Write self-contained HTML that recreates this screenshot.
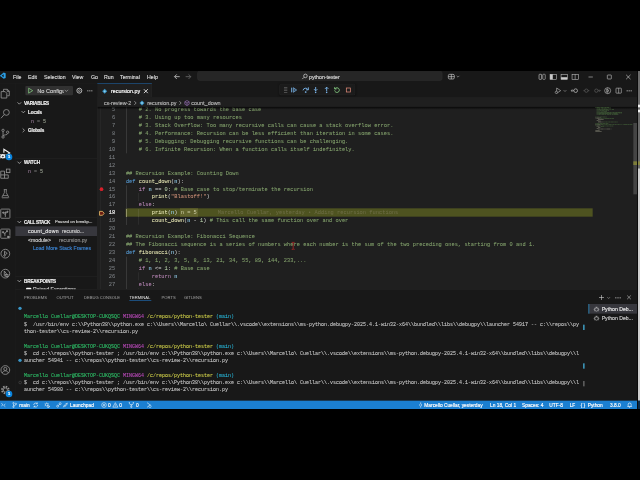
<!DOCTYPE html>
<html lang="en"><head><meta charset="utf-8"><title>recursion.py - python-tester - Visual Studio Code</title>
<style>
html,body{margin:0;padding:0;background:#000;}
body{width:640px;height:480px;overflow:hidden;position:relative;}
#w{position:absolute;left:0;top:0;width:1920px;height:1440px;transform:scale(0.33333333);transform-origin:0 0;filter:blur(0.3px);font-family:"Liberation Sans",sans-serif;color:#ccc;font-size:16px;-webkit-text-stroke:0.45px;}
#win{position:absolute;left:0px;top:213px;width:1920px;height:1014px;background:#1f1f1f;overflow:hidden;}
.a{position:absolute;}
.t{position:absolute;white-space:nowrap;line-height:20px;height:20px;}
.b{font-weight:bold;}
svg{position:absolute;overflow:visible;}
.mono{font-family:"Liberation Mono",monospace;}
.code{position:absolute;white-space:pre;font-family:"Liberation Mono",monospace;font-size:16px;letter-spacing:0.07px;line-height:24px;height:24px;color:#ccc;-webkit-text-stroke:0.15px;}
.ln{position:absolute;white-space:pre;font-family:"Liberation Mono",monospace;font-size:16px;letter-spacing:0.07px;line-height:24px;height:24px;color:#6e7681;text-align:right;width:60px;-webkit-text-stroke:0.15px;}
.c{color:#84a36d}.k{color:#569cd6}.p{color:#bb88b8}.f{color:#e4e4b2}.v{color:#9cdcfe}.s{color:#ce9178}.n{color:#b5cea8}
.term{position:absolute;white-space:pre;font-family:"Liberation Mono",monospace;font-size:15px;line-height:22px;height:22px;color:#ccc;-webkit-text-stroke:0.2px;}
.g{color:#2ec46a}.m{color:#c24cc2}.y{color:#d2d24a}.cy{color:#29b8db}
.ig{position:absolute;width:1.500px;background:#444;}
</style></head>
<body><div id="w"><div id="win">
<div class="a" style="left:0;top:0;width:1920px;height:37px;background:#181818;border-bottom:1px solid #2b2b2b;box-sizing:border-box"></div>
<svg style="left:-6px;top:4px" width="24" height="20" viewBox="0 0 24 20"><path d="M17 0.5 L23 3 V17 L17 19.5 L6 10 Z M17 5.5 L11 10 L17 14.5 Z" fill="#2a9fe6"/><path d="M0 6 L2 4.5 L9 10 L2 15.5 L0 14 L5 10 Z" fill="#1f8ad2"/></svg>
<div class="t" style="left:39px;top:8px;font-size:15.8px;color:#d8d8d8">File</div>
<div class="t" style="left:84px;top:8px;font-size:15.8px;color:#d8d8d8">Edit</div>
<div class="t" style="left:132px;top:8px;font-size:15.8px;color:#d8d8d8">Selection</div>
<div class="t" style="left:216px;top:8px;font-size:15.8px;color:#d8d8d8">View</div>
<div class="t" style="left:273px;top:8px;font-size:15.8px;color:#d8d8d8">Go</div>
<div class="t" style="left:312px;top:8px;font-size:15.8px;color:#d8d8d8">Run</div>
<div class="t" style="left:360px;top:8px;font-size:15.8px;color:#d8d8d8">Terminal</div>
<div class="t" style="left:441px;top:8px;font-size:15.8px;color:#d8d8d8">Help</div>
<svg style="left:521px;top:7px" width="20" height="20" viewBox="0 0 16 16"><path d="M14.500 8H2.500M7.500 2.500L2 8l5.500 5.500" fill="none" stroke="#d8d8d8" stroke-width="1.800"/></svg>
<svg style="left:555px;top:7px" width="20" height="20" viewBox="0 0 16 16"><path d="M1.500 8h12M8.500 2.500L14 8l-5.500 5.500" fill="none" stroke="#707070" stroke-width="1.800"/></svg>
<div class="a" style="left:592px;top:0px;width:735px;height:29px;box-sizing:border-box;background:#262626;border:1px solid #383838;border-radius:7px"></div>
<svg style="left:905px;top:7px" width="19" height="19" viewBox="0 0 16 16"><circle cx="9.5" cy="6.5" r="4.5" fill="none" stroke="#ddd" stroke-width="1.700"/><path d="M6 10L1.5 14.5" stroke="#ddd" stroke-width="1.800"/></svg>
<div class="t" style="left:927px;top:8px;font-size:15.8px;color:#d8d8d8">python-tester</div>
<svg style="left:1344px;top:8px" width="20" height="18" viewBox="0 0 20 18"><rect x="1" y="2" width="18" height="14" rx="4" fill="none" stroke="#ccc" stroke-width="2"/><path d="M1 9h18M10 2v14" stroke="#ccc" stroke-width="2"/></svg>
<svg style="left:1369px;top:13px" width="10" height="8" viewBox="0 0 10 8"><path d="M1 1.5l4 4 4-4" fill="none" stroke="#ccc" stroke-width="1.4"/></svg>
<svg style="left:1616px;top:8px" width="21" height="19" viewBox="0 0 18 16"><rect x="1" y="1.5" width="6.5" height="13" rx="1.5" fill="none" stroke="#ddd" stroke-width="1.500"/><rect x="10.5" y="1.5" width="6.5" height="13" rx="1.5" fill="none" stroke="#ccc" stroke-width="1.4"/></svg>
<svg style="left:1649px;top:8px" width="21" height="19" viewBox="0 0 18 16"><rect x="1" y="1.5" width="16" height="13" fill="none" stroke="#ccc" stroke-width="1.4"/><rect x="1" y="1.5" width="7" height="13" fill="#ccc"/></svg>
<svg style="left:1682px;top:8px" width="21" height="19" viewBox="0 0 18 16"><rect x="1" y="1.5" width="16" height="13" fill="none" stroke="#ccc" stroke-width="1.4"/><rect x="1" y="9" width="16" height="5.5" fill="#ccc"/></svg>
<svg style="left:1715px;top:8px" width="21" height="19" viewBox="0 0 18 16"><rect x="1" y="1.5" width="16" height="13" fill="none" stroke="#ccc" stroke-width="1.4"/><path d="M9 1.5v13" stroke="#ccc" stroke-width="1.4"/></svg>
<svg style="left:1764px;top:10px" width="16" height="16" viewBox="0 0 16 16"><path d="M1.500 8h13" stroke="#e8e8e8" stroke-width="1.500"/></svg>
<svg style="left:1820px;top:10px" width="16" height="16" viewBox="0 0 16 16"><rect x="2" y="2" width="12" height="12" rx="1.500" fill="none" stroke="#e8e8e8" stroke-width="1.500"/></svg>
<svg style="left:1877px;top:10px" width="16" height="16" viewBox="0 0 16 16"><path d="M1.500 1.500l13 13M14.500 1.500l-13 13" stroke="#f0f0f0" stroke-width="1.600"/></svg>
<div class="a" style="left:0;top:37px;width:46px;height:952px;background:#181818;border-right:1px solid #2b2b2b;box-sizing:border-box"></div>
<svg style="left:1.0px;top:52.5px" width="30" height="30" viewBox="0 0 24 24" fill="none" stroke="#939393" stroke-width="2"><path d="M7.500 6V1.500h9.500l4.500 4.500v11h-5"/><path d="M16.500 1.500V6.500H21.500"/><path d="M2 7h9.500l4 4v11.500H2z" /></svg>
<svg style="left:1.0px;top:112.5px" width="30" height="30" viewBox="0 0 24 24" fill="none" stroke="#939393" stroke-width="2"><circle cx="14.500" cy="9" r="7"/><path d="M9.500 14L1.500 23" stroke-width="2"/></svg>
<svg style="left:1.0px;top:172.5px" width="30" height="30" viewBox="0 0 24 24" fill="none" stroke="#939393" stroke-width="2"><circle cx="6.500" cy="4" r="2.800"/><circle cx="6.500" cy="20" r="2.800"/><circle cx="17.500" cy="8.500" r="2.800"/><path d="M6.500 7v10M17.500 11.500c0 5-11 2-11 6"/></svg>
<svg style="left:1.0px;top:232.5px" width="30" height="30" viewBox="0 0 24 24" fill="none" stroke="#f8f8f8" stroke-width="2.600"><path d="M8.500 10V1.500L22.500 10.500 14 16"/><circle cx="6" cy="18" r="4" /><path d="M0 14l3 2M12 14l-3 2M0 22.500l3-2M12 22.500l-3-2M0 18.500h2M10 18.500h2M2.500 17h7"/></svg>
<div class="a" style="left:17px;top:248px;width:20px;height:20px;border-radius:10px;background:#0a84dd"></div>
<div class="t b" style="left:24px;top:248px;font-size:12px;color:#fff">1</div>
<svg style="left:1.0px;top:292.5px" width="30" height="30" viewBox="0 0 24 24" fill="none" stroke="#939393" stroke-width="2"><path d="M1 6h9v9h9v8H1zM10 15v8M1 15h9"/><rect x="14.500" y="1" width="8.500" height="8.500"/></svg>
<svg style="left:2.0px;top:353.5px" width="28" height="28" viewBox="0 0 24 24" fill="none" stroke="#939393" stroke-width="2"><path d="M8 1.500h8M9.500 1.500v8L3.500 20.500a1.300 1.300 0 0 0 1.200 2h14.600a1.300 1.300 0 0 0 1.200-2L14.500 9.500v-8M5.500 17h13"/></svg>
<svg style="left:1.0px;top:412.5px" width="30" height="30" viewBox="0 0 24 24" fill="none" stroke="#939393" stroke-width="2"><rect x="1" y="1" width="22" height="22" rx="1.500"/><path d="M12 20V11M12 14.500l-4.500-4M12 12.500l4.500-4" stroke-width="2"/><circle cx="7" cy="9.500" r="1.600" fill="#939393"/><circle cx="17" cy="7.500" r="1.600" fill="#939393"/><circle cx="12" cy="9" r="1.300" fill="#939393"/></svg>
<svg style="left:1.0px;top:472.5px" width="30" height="30" viewBox="0 0 24 24" fill="none" stroke="#939393" stroke-width="2"><rect x="1" y="1" width="22" height="22" rx="1.500"/><path d="M11 18V9.500M11 13l-4-3.500M11 11l4.500-4" stroke-width="2"/><circle cx="6.500" cy="8.500" r="1.600" fill="#939393"/><circle cx="16" cy="6" r="1.600" fill="#939393"/><rect x="16" y="17" width="7" height="6" fill="#939393" stroke="#181818" stroke-width="1"/></svg>
<svg style="left:1.0px;top:532.5px" width="30" height="30" viewBox="0 0 24 24" fill="none" stroke="#939393" stroke-width="2"><circle cx="12" cy="12" r="10.500"/><circle cx="10" cy="16.500" r="1.800"/><path d="M10 14.500V6l6.500 5.500-5 2.500"/></svg>
<svg style="left:1.0px;top:592.5px" width="30" height="30" viewBox="0 0 24 24" fill="none" stroke="#939393" stroke-width="2"><circle cx="12" cy="12" r="10.500"/><path d="M9.500 18.500V5.500l7 9h-5.500"/><rect x="13" y="14.500" width="5.500" height="4.500"/></svg>
<svg style="left:1.0px;top:882.0px" width="30" height="30" viewBox="0 0 24 24" fill="none" stroke="#939393" stroke-width="2"><circle cx="12" cy="12" r="10.500"/><circle cx="12" cy="9.500" r="3.800"/><path d="M4.500 19.500c1.500-4 4-5.500 7.500-5.500s6 1.500 7.500 5.500"/></svg>
<svg style="left:1.0px;top:942.0px" width="30" height="30" viewBox="0 0 24 24" fill="none" stroke="#939393" stroke-width="2"><circle cx="12" cy="12" r="8" stroke-width="4.500" stroke-dasharray="3.600 2.680"/><circle cx="12" cy="12" r="5"/></svg>
<div class="a" style="left:17px;top:959px;width:20px;height:20px;border-radius:10px;background:#0a84dd"></div>
<div class="t b" style="left:24px;top:959px;font-size:12px;color:#fff">1</div>
<div class="a" style="left:46px;top:37px;width:246px;height:618px;background:#181818;border-right:1px solid #2b2b2b;box-sizing:border-box"></div>
<div class="a" style="left:76px;top:45px;width:143px;height:28px;background:#313131;border-radius:3px"></div>
<svg style="left:84px;top:50px" width="16" height="18" viewBox="0 0 16 18"><path d="M2 1.5l12 7.5-12 7.5z" fill="none" stroke="#89d185" stroke-width="2.2" stroke-linejoin="round"/></svg>
<div class="a" style="left:112px;top:50px;width:80px;height:22px;overflow:hidden"><div class="t" style="left:0;top:0;font-size:16.800px;color:#ccc">No Configurations</div></div>
<svg style="left:193px;top:55px" width="12" height="9" viewBox="0 0 12 9"><path d="M1 1.5l5 5 5-5" fill="none" stroke="#ccc" stroke-width="1.6"/></svg>
<svg style="left:228px;top:49px" width="20" height="20" viewBox="0 0 20 20"><circle cx="10" cy="10" r="7.400" fill="none" stroke="#ccc" stroke-width="2.600"/><circle cx="10" cy="10" r="2.800" fill="none" stroke="#ccc" stroke-width="1.800"/></svg>
<div class="a" style="left:262px;top:58px;width:3px;height:3px;background:#ccc;box-shadow:6px 0 #ccc,12px 0 #ccc"></div>
<svg style="left:51px;top:92px" width="14" height="10" viewBox="0 0 14 10"><path d="M1.500 2l5.500 5.500L12.500 2" fill="none" stroke="#ccc" stroke-width="2"/></svg>
<div class="t b" style="left:72px;top:88px;font-size:13.800px;letter-spacing:-0.4px;color:#f4f4f4">VARIABLES</div>
<svg style="left:63px;top:118px" width="14" height="10" viewBox="0 0 14 10"><path d="M1.500 2l5.500 5.500L12.500 2" fill="none" stroke="#ccc" stroke-width="2"/></svg>
<div class="t b" style="left:84px;top:115px;font-size:13.800px;letter-spacing:-0.300px;color:#f4f4f4">Locals</div>
<div class="t mono" style="left:93px;top:143px;font-size:15px"><span style="color:#8a718a">n</span> <span style="color:#777">=</span> <span style="color:#8e9586">5</span></div>
<svg style="left:66px;top:171px" width="10" height="14" viewBox="0 0 10 14"><path d="M2 1.500l5.500 5.500L2 12.500" fill="none" stroke="#ccc" stroke-width="2"/></svg>
<div class="t b" style="left:84px;top:170px;font-size:13.800px;letter-spacing:-0.300px;color:#f4f4f4">Globals</div>
<div class="a" style="left:46px;top:262px;width:246px;height:1px;background:#2b2b2b"></div>
<svg style="left:51px;top:270px" width="14" height="10" viewBox="0 0 14 10"><path d="M1.500 2l5.500 5.500L12.500 2" fill="none" stroke="#ccc" stroke-width="2"/></svg>
<div class="t b" style="left:72px;top:266px;font-size:13.800px;letter-spacing:-0.4px;color:#f4f4f4">WATCH</div>
<div class="t mono" style="left:84px;top:293px;font-size:15px"><span style="color:#8a718a">n</span> <span style="color:#777">=</span> <span style="color:#8e9586">5</span></div>
<div class="a" style="left:46px;top:440px;width:246px;height:1px;background:#2b2b2b"></div>
<svg style="left:51px;top:448px" width="14" height="10" viewBox="0 0 14 10"><path d="M1.500 2l5.500 5.500L12.500 2" fill="none" stroke="#ccc" stroke-width="2"/></svg>
<div class="t b" style="left:72px;top:444px;font-size:13.800px;letter-spacing:-0.9px;color:#f4f4f4">CALL STACK</div>
<div class="t" style="left:165px;top:442px;font-size:12.5px;color:#ccc">Paused on breakp...</div>
<div class="a" style="left:46px;top:466px;width:245px;height:29px;background:#37373d"></div>
<div class="t" style="left:84px;top:471px;font-size:15.500px;letter-spacing:0.900px;color:#e4e4e4">count_down</div>
<div class="t" style="left:186px;top:471px;font-size:15px;color:#ccc">recursio...</div>
<div class="t" style="left:84px;top:497px;font-size:15.5px;color:#ccc">&lt;module&gt;</div>
<div class="t" style="left:177px;top:497px;font-size:15.5px;color:#8a8a8a">recursion.py</div>
<div class="t" style="left:99px;top:522px;font-size:15.5px;color:#3b82d0">Load More Stack Frames</div>
<div class="a" style="left:46px;top:617px;width:246px;height:1px;background:#2b2b2b"></div>
<svg style="left:51px;top:625px" width="14" height="10" viewBox="0 0 14 10"><path d="M1.500 2l5.500 5.500L12.500 2" fill="none" stroke="#ccc" stroke-width="2"/></svg>
<div class="t b" style="left:72px;top:621px;font-size:13.800px;letter-spacing:-0.4px;color:#f4f4f4">BREAKPOINTS</div>
<div class="a" style="left:78px;top:650px;width:16px;height:16px;border-radius:3px;background:#fff"></div>
<div class="t" style="left:99px;top:646px;font-size:15.5px;color:#ccc">Raised Exceptions</div>
<div class="a" style="left:292px;top:36px;width:1628px;height:43px;background:#181818;border-bottom:1px solid #2b2b2b;box-sizing:border-box"></div>
<div class="a" style="left:292px;top:36px;width:164px;height:43px;background:#1f1f1f;border-top:2px solid #1c5890;border-right:1px solid #2b2b2b;box-sizing:border-box"></div>
<svg style="left:306px;top:53px" width="16" height="16" viewBox="0 0 16 16"><path d="M8 0.5L15.5 8 8 15.5 0.500 8z" fill="#3a94c4"/><path d="M8 4.500L11.5 8 8 11.5 4.500 8z" fill="#8fd0ee"/></svg>
<div class="t" style="left:333px;top:52px;font-size:16px;color:#fff">recursion.py</div>
<svg style="left:430px;top:53px" width="15" height="15" viewBox="0 0 14 14"><path d="M1.500 1.500l11 11M12.500 1.500l-11 11" stroke="#fff" stroke-width="2.200"/></svg>
<svg style="left:1664px;top:49px" width="20" height="20" viewBox="0 0 20 20"><path d="M6 2l12 8-12 8z" fill="none" stroke="#ccc" stroke-width="1.7" stroke-linejoin="round"/><circle cx="5" cy="15" r="3.5" fill="#181818" stroke="#ccc" stroke-width="1.5"/></svg>
<svg style="left:1690px;top:56px" width="10" height="8" viewBox="0 0 10 8"><path d="M1 1.500l4 4 4-4" fill="none" stroke="#ccc" stroke-width="1.4"/></svg>
<svg style="left:1713px;top:49px" width="22" height="20" viewBox="0 0 22 20"><circle cx="14" cy="10" r="5.5" fill="none" stroke="#ccc" stroke-width="2"/><path d="M1 10h8M4 6l-3 4 3 4" fill="none" stroke="#ccc" stroke-width="1.7"/></svg>
<svg style="left:1749px;top:49px" width="20" height="20" viewBox="0 0 20 20"><circle cx="10" cy="10" r="5" fill="none" stroke="#6a6a6a" stroke-width="1.7"/><path d="M1 10h4M15 10h4" stroke="#6a6a6a" stroke-width="1.7"/></svg>
<svg style="left:1780px;top:49px" width="22" height="20" viewBox="0 0 22 20"><circle cx="9" cy="10" r="5" fill="none" stroke="#6a6a6a" stroke-width="1.7"/><path d="M14 10h7M18 7l3 3-3 3" fill="none" stroke="#6a6a6a" stroke-width="1.7"/></svg>
<svg style="left:1812px;top:48px" width="22" height="22" viewBox="0 0 22 22"><circle cx="11" cy="11" r="9" fill="none" stroke="#ccc" stroke-width="1.7"/><path d="M8 6l7 5-7 5z" fill="none" stroke="#ccc" stroke-width="1.6"/><path d="M11 2v18" stroke="#ccc" stroke-width="1.2"/></svg>
<svg style="left:1846px;top:49px" width="20" height="20" viewBox="0 0 20 20"><rect x="2" y="2.5" width="16" height="15" rx="1.5" fill="none" stroke="#ccc" stroke-width="1.7"/><path d="M10 2.5v15" stroke="#ccc" stroke-width="1.7"/></svg>
<div class="a" style="left:1880px;top:58px;width:3px;height:3px;background:#ccc;box-shadow:6px 0 #ccc,12px 0 #ccc"></div>
<div class="a" style="left:838px;top:39px;width:228px;height:34px;background:#1b1b1b;border:1px solid #303030;box-sizing:border-box;box-shadow:0 0 5px rgba(0,0,0,.5);border-radius:5px"></div>
<div class="a" style="left:852px;top:48px;width:10px;height:2px;background:#666;box-shadow:0 5px #666,0 10px #666,0 15px #666"></div>
<svg style="left:872px;top:47px" width="20" height="20" viewBox="0 0 20 20"><path d="M3 3v14" stroke="#80bdf5" stroke-width="2.600"/><path d="M8 3l10 7-10 7z" fill="#80bdf5" fill-opacity=".35" stroke="#80bdf5" stroke-width="1.8" stroke-linejoin="round"/></svg>
<svg style="left:906px;top:47px" width="22" height="20" viewBox="0 0 22 20"><path d="M3 11a8 8 0 0 1 15-2" fill="none" stroke="#80bdf5" stroke-width="2.600"/><path d="M19 2v7.500h-7" fill="none" stroke="#80bdf5" stroke-width="2.600"/><circle cx="11" cy="16" r="2.6" fill="#80bdf5"/></svg>
<svg style="left:937px;top:47px" width="20" height="20" viewBox="0 0 20 20"><path d="M10 1v11M5 7.500l5 5 5-5" fill="none" stroke="#80bdf5" stroke-width="2.600"/><circle cx="10" cy="17" r="2.4" fill="#80bdf5"/></svg>
<svg style="left:970px;top:47px" width="20" height="20" viewBox="0 0 20 20"><path d="M10 13V2M5 6.500l5-5 5 5" fill="none" stroke="#80bdf5" stroke-width="2.600"/><circle cx="10" cy="17" r="2.4" fill="#80bdf5"/></svg>
<svg style="left:1001px;top:47px" width="20" height="20" viewBox="0 0 20 20"><path d="M4.500 6a7 7 0 1 1-1.500 5" fill="none" stroke="#89d185" stroke-width="2.600"/><path d="M3 1.500v5.500h5.500" fill="none" stroke="#89d185" stroke-width="2.600"/></svg>
<svg style="left:1035px;top:47px" width="20" height="20" viewBox="0 0 20 20"><rect x="4" y="4" width="12" height="12" fill="none" stroke="#e08a78" stroke-width="2.200"/></svg>
<div class="a" style="left:292px;top:79px;width:1628px;height:28px;background:#1f1f1f"></div>
<div class="t" style="left:312px;top:86px;font-size:16px;color:#b4b4b4">cs-review-2</div>
<svg style="left:401px;top:89px" width="10" height="14" viewBox="0 0 10 14"><path d="M2 1.500l5.500 5.500L2 12.500" fill="none" stroke="#b4b4b4" stroke-width="2"/></svg>
<svg style="left:418px;top:88px" width="16" height="16" viewBox="0 0 16 16"><path d="M8 0.5L15.5 8 8 15.5 0.500 8z" fill="#3a94c4"/><path d="M8 4.500L11.5 8 8 11.5 4.500 8z" fill="#8fd0ee"/></svg>
<div class="t" style="left:442px;top:86px;font-size:16px;color:#b4b4b4">recursion.py</div>
<svg style="left:536px;top:89px" width="10" height="14" viewBox="0 0 10 14"><path d="M2 1.500l5.500 5.500L2 12.500" fill="none" stroke="#b4b4b4" stroke-width="2"/></svg>
<svg style="left:552px;top:87px" width="18" height="18" viewBox="0 0 18 18"><path d="M9 1.500l6.500 3.800v7.400L9 16.500l-6.500-3.800V5.300z M2.500 5.300L9 9l6.500-3.700M9 9v7.500" fill="none" stroke="#b180d7" stroke-width="1.600"/></svg>
<div class="t" style="left:574px;top:86px;font-size:16.300px;color:#b4b4b4">count_down</div>
<div class="a" style="left:292px;top:107px;width:1628px;height:548px;overflow:hidden">
<div class="a" style="left:9px;top:0;width:1.500px;height:548px;background:#2a2a2a"></div>
<div class="a" style="left:84.7px;top:305.4px;width:1401px;height:25px;background:#4e5320"></div>
<div class="a" style="left:248.1px;top:305.4px;width:54px;height:25px;background:#63652e"></div>
<div class="ig" style="left:86.2px;top:-2.6px;height:142.8px;background:#464646"></div>
<div class="ig" style="left:86.2px;top:235.5px;height:119.0px;background:#464646"></div>
<div class="ig" style="left:123.6px;top:259.2px;height:23.8px;background:#464646"></div>
<div class="ig" style="left:123.6px;top:306.9px;height:47.6px;background:#4a4a4a"></div>
<div class="ig" style="left:86.2px;top:306.9px;height:23.8px;background:#b9b980"></div>
<div class="ig" style="left:123.6px;top:306.9px;height:23.8px;background:#77793c"></div>
<div class="ig" style="left:86.2px;top:449.7px;height:119.0px;background:#464646"></div>
<div class="ig" style="left:123.6px;top:497.2px;height:23.8px;background:#464646"></div>
<div class="ig" style="left:123.6px;top:544.9px;height:23.8px;background:#464646"></div>
<div class="ln" style="left:-6.5px;top:-2.6px;color:#7f8387">5</div>
<div class="code" style="left:85.7px;top:-2.6px"><span class="c">    # 2. No progress towards the base case</span></div>
<div class="ln" style="left:-6.5px;top:21.2px;color:#7f8387">6</div>
<div class="code" style="left:85.7px;top:21.2px"><span class="c">    # 3. Using up too many resources</span></div>
<div class="ln" style="left:-6.5px;top:45.1px;color:#7f8387">7</div>
<div class="code" style="left:85.7px;top:45.1px"><span class="c">    # 3. Stack Overflow: Too many recursive calls can cause a stack overflow error.</span></div>
<div class="ln" style="left:-6.5px;top:68.9px;color:#7f8387">8</div>
<div class="code" style="left:85.7px;top:68.9px"><span class="c">    # 4. Performance: Recursion can be less efficient than iteration in some cases.</span></div>
<div class="ln" style="left:-6.5px;top:92.6px;color:#7f8387">9</div>
<div class="code" style="left:85.7px;top:92.6px"><span class="c">    # 5. Debugging: Debugging recursive functions can be challenging.</span></div>
<div class="ln" style="left:-6.5px;top:116.4px;color:#7f8387">10</div>
<div class="code" style="left:85.7px;top:116.4px"><span class="c">    # 6. Infinite Recursion: When a function calls itself indefinitely.</span></div>
<div class="ln" style="left:-6.5px;top:140.2px;color:#7f8387">11</div>
<div class="ln" style="left:-6.5px;top:164.1px;color:#7f8387">12</div>
<div class="ln" style="left:-6.5px;top:187.9px;color:#7f8387">13</div>
<div class="code" style="left:85.7px;top:187.9px"><span class="c">## Recursion Example: Counting Down</span></div>
<div class="ln" style="left:-6.5px;top:211.6px;color:#7f8387">14</div>
<div class="code" style="left:85.7px;top:211.6px"><span class="k">def</span> <span class="f">count_down</span>(<span class="v">n</span>):</div>
<div class="ln" style="left:-6.5px;top:235.5px;color:#7f8387">15</div>
<div class="code" style="left:85.7px;top:235.5px">    <span class="p">if</span> <span class="v">n</span> == <span class="n">0</span>: <span class="c"># Base case to stop/terminate the recursion</span></div>
<div class="ln" style="left:-6.5px;top:259.2px;color:#7f8387">16</div>
<div class="code" style="left:85.7px;top:259.2px">        <span class="f">print</span>(<span class="s">&quot;Blastoff!&quot;</span>)</div>
<div class="ln" style="left:-6.5px;top:283.0px;color:#7f8387">17</div>
<div class="code" style="left:85.7px;top:283.0px">    <span class="p">else</span>:</div>
<div class="ln" style="left:-6.5px;top:306.9px;color:#f4f4f4;-webkit-text-stroke:0.500px">18</div>
<div class="code" style="left:85.7px;top:306.9px">        <span class="f">print</span>(<span class="v">n</span>)</div>
<div class="ln" style="left:-6.5px;top:330.7px;color:#7f8387">19</div>
<div class="code" style="left:85.7px;top:330.7px">        <span class="f">count_down</span>(<span class="v">n</span> - <span class="n">1</span>) <span class="c"># This call the same function over and over</span></div>
<div class="ln" style="left:-6.5px;top:354.5px;color:#7f8387">20</div>
<div class="ln" style="left:-6.5px;top:378.2px;color:#7f8387">21</div>
<div class="code" style="left:85.7px;top:378.2px"><span class="c">## Recursion Example: Fibonacci Sequence</span></div>
<div class="ln" style="left:-6.5px;top:402.0px;color:#7f8387">22</div>
<div class="code" style="left:85.7px;top:402.0px"><span class="c">## The Fibonacci sequence is a series of numbers where each number is the sum of the two preceding ones, starting from 0 and 1.</span></div>
<div class="ln" style="left:-6.5px;top:425.9px;color:#7f8387">23</div>
<div class="code" style="left:85.7px;top:425.9px"><span class="k">def</span> <span class="f">fibonacci</span>(<span class="v">n</span>):</div>
<div class="ln" style="left:-6.5px;top:449.7px;color:#7f8387">24</div>
<div class="code" style="left:85.7px;top:449.7px"><span class="c">    # 1, 1, 2, 3, 5, 8, 13, 21, 34, 55, 89, 144, 233,...</span></div>
<div class="ln" style="left:-6.5px;top:473.5px;color:#7f8387">25</div>
<div class="code" style="left:85.7px;top:473.5px">    <span class="p">if</span> <span class="v">n</span> <= <span class="n">1</span>: <span class="c"># Base case</span></div>
<div class="ln" style="left:-6.5px;top:497.2px;color:#7f8387">26</div>
<div class="code" style="left:85.7px;top:497.2px">        <span class="p">return</span> <span class="v">n</span></div>
<div class="ln" style="left:-6.5px;top:521.0px;color:#7f8387">27</div>
<div class="code" style="left:85.7px;top:521.0px">    <span class="p">else</span>:</div>
<div class="ln" style="left:-6.5px;top:544.9px;color:#7f8387">28</div>
<div class="code" style="left:85.7px;top:544.9px">        <span class="p">return</span> <span class="f">fibonacci</span>(<span class="v">n</span> - <span class="n">1</span>) + <span class="f">fibonacci</span>(<span class="v">n</span> - <span class="n">2</span>)</div>
<div class="code" style="left:250.1px;top:306.9px;color:#c8c8a0">n = 5</div>
<div class="code" style="left:361.3px;top:306.9px;color:#6d6d45">Marcello Cuellar, yesterday • Adding recursion functions</div>
<div class="a" style="left:7px;top:242.0px;width:11px;height:11px;border-radius:6px;background:#d8202a"></div>
<svg style="left:5px;top:311.9px" width="17" height="16" viewBox="0 0 16 14"><path d="M1.500 1.500h8.500l4.500 5.500-4.500 5.500H1.500z" fill="#6a1c12" stroke="#f2c46a" stroke-width="2.200" stroke-linejoin="round"/></svg>
<svg style="left:582px;top:405px" width="11" height="25" viewBox="0 0 10 22"><path d="M1 1.500h3l1 1 1-1h3M5 2.500v17M1 20.500h3l1-1 1 1h3" fill="none" stroke="#d42a2a" stroke-width="1.800"/></svg>
<div class="a" style="left:0;top:0;width:1628px;height:9px;background:linear-gradient(#000000cc,#00000000)"></div>
<div class="a" style="left:1494.0px;top:1.0px;width:1.9px;height:2px;background:#3f5a36"></div><div class="a" style="left:1496.9px;top:1.0px;width:9.7px;height:2px;background:#3f5a36"></div><div class="a" style="left:1507.6px;top:1.0px;width:1.0px;height:2px;background:#3f5a36"></div><div class="a" style="left:1509.5px;top:1.0px;width:7.8px;height:2px;background:#3f5a36"></div><div class="a" style="left:1518.2px;top:1.0px;width:3.9px;height:2px;background:#3f5a36"></div><div class="a" style="left:1523.1px;top:1.0px;width:4.8px;height:2px;background:#3f5a36"></div><div class="a" style="left:1528.9px;top:1.0px;width:5.8px;height:2px;background:#3f5a36"></div><div class="a" style="left:1497.9px;top:3.4px;width:1.0px;height:2px;background:#3f5a36"></div><div class="a" style="left:1499.8px;top:3.4px;width:2.9px;height:2px;background:#3f5a36"></div><div class="a" style="left:1503.7px;top:3.4px;width:5.8px;height:2px;background:#3f5a36"></div><div class="a" style="left:1510.5px;top:3.4px;width:1.9px;height:2px;background:#3f5a36"></div><div class="a" style="left:1513.4px;top:3.4px;width:4.8px;height:2px;background:#3f5a36"></div><div class="a" style="left:1519.2px;top:3.4px;width:2.9px;height:2px;background:#3f5a36"></div><div class="a" style="left:1523.1px;top:3.4px;width:2.9px;height:2px;background:#3f5a36"></div><div class="a" style="left:1527.0px;top:3.4px;width:3.9px;height:2px;background:#3f5a36"></div><div class="a" style="left:1531.8px;top:3.4px;width:9.7px;height:2px;background:#3f5a36"></div><div class="a" style="left:1497.9px;top:5.8px;width:1.0px;height:2px;background:#3f5a36"></div><div class="a" style="left:1499.8px;top:5.8px;width:1.9px;height:2px;background:#3f5a36"></div><div class="a" style="left:1502.7px;top:5.8px;width:6.8px;height:2px;background:#3f5a36"></div><div class="a" style="left:1510.5px;top:5.8px;width:1.9px;height:2px;background:#3f5a36"></div><div class="a" style="left:1513.4px;top:5.8px;width:4.8px;height:2px;background:#3f5a36"></div><div class="a" style="left:1519.2px;top:5.8px;width:3.9px;height:2px;background:#3f5a36"></div><div class="a" style="left:1524.1px;top:5.8px;width:3.9px;height:2px;background:#3f5a36"></div><div class="a" style="left:1497.9px;top:8.3px;width:1.0px;height:2px;background:#3f5a36"></div><div class="a" style="left:1499.8px;top:8.3px;width:1.9px;height:2px;background:#3f5a36"></div><div class="a" style="left:1502.7px;top:8.3px;width:7.8px;height:2px;background:#3f5a36"></div><div class="a" style="left:1511.5px;top:8.3px;width:4.8px;height:2px;background:#3f5a36"></div><div class="a" style="left:1517.3px;top:8.3px;width:1.9px;height:2px;background:#3f5a36"></div><div class="a" style="left:1520.2px;top:8.3px;width:2.9px;height:2px;background:#3f5a36"></div><div class="a" style="left:1524.1px;top:8.3px;width:8.7px;height:2px;background:#3f5a36"></div><div class="a" style="left:1533.8px;top:8.3px;width:1.9px;height:2px;background:#3f5a36"></div><div class="a" style="left:1536.7px;top:8.3px;width:2.9px;height:2px;background:#3f5a36"></div><div class="a" style="left:1540.6px;top:8.3px;width:1.9px;height:2px;background:#3f5a36"></div><div class="a" style="left:1543.5px;top:8.3px;width:6.8px;height:2px;background:#3f5a36"></div><div class="a" style="left:1497.9px;top:10.7px;width:1.0px;height:2px;background:#3f5a36"></div><div class="a" style="left:1499.8px;top:10.7px;width:1.9px;height:2px;background:#3f5a36"></div><div class="a" style="left:1502.7px;top:10.7px;width:1.9px;height:2px;background:#3f5a36"></div><div class="a" style="left:1505.6px;top:10.7px;width:7.8px;height:2px;background:#3f5a36"></div><div class="a" style="left:1514.4px;top:10.7px;width:6.8px;height:2px;background:#3f5a36"></div><div class="a" style="left:1522.1px;top:10.7px;width:2.9px;height:2px;background:#3f5a36"></div><div class="a" style="left:1526.0px;top:10.7px;width:3.9px;height:2px;background:#3f5a36"></div><div class="a" style="left:1530.9px;top:10.7px;width:3.9px;height:2px;background:#3f5a36"></div><div class="a" style="left:1497.9px;top:13.1px;width:1.0px;height:2px;background:#3f5a36"></div><div class="a" style="left:1499.8px;top:13.1px;width:1.9px;height:2px;background:#3f5a36"></div><div class="a" style="left:1502.7px;top:13.1px;width:4.8px;height:2px;background:#3f5a36"></div><div class="a" style="left:1508.5px;top:13.1px;width:1.9px;height:2px;background:#3f5a36"></div><div class="a" style="left:1511.5px;top:13.1px;width:2.9px;height:2px;background:#3f5a36"></div><div class="a" style="left:1515.3px;top:13.1px;width:3.9px;height:2px;background:#3f5a36"></div><div class="a" style="left:1520.2px;top:13.1px;width:8.7px;height:2px;background:#3f5a36"></div><div class="a" style="left:1497.9px;top:15.5px;width:1.0px;height:2px;background:#3f5a36"></div><div class="a" style="left:1499.8px;top:15.5px;width:1.9px;height:2px;background:#3f5a36"></div><div class="a" style="left:1502.7px;top:15.5px;width:4.8px;height:2px;background:#3f5a36"></div><div class="a" style="left:1508.5px;top:15.5px;width:8.7px;height:2px;background:#3f5a36"></div><div class="a" style="left:1518.2px;top:15.5px;width:2.9px;height:2px;background:#3f5a36"></div><div class="a" style="left:1522.1px;top:15.5px;width:3.9px;height:2px;background:#3f5a36"></div><div class="a" style="left:1527.0px;top:15.5px;width:8.7px;height:2px;background:#3f5a36"></div><div class="a" style="left:1536.7px;top:15.5px;width:4.8px;height:2px;background:#3f5a36"></div><div class="a" style="left:1542.5px;top:15.5px;width:2.9px;height:2px;background:#3f5a36"></div><div class="a" style="left:1546.4px;top:15.5px;width:4.8px;height:2px;background:#3f5a36"></div><div class="a" style="left:1552.2px;top:15.5px;width:1.0px;height:2px;background:#3f5a36"></div><div class="a" style="left:1554.1px;top:15.5px;width:4.8px;height:2px;background:#3f5a36"></div><div class="a" style="left:1560.0px;top:15.5px;width:7.8px;height:2px;background:#3f5a36"></div><div class="a" style="left:1568.7px;top:15.5px;width:5.8px;height:2px;background:#3f5a36"></div><div class="a" style="left:1497.9px;top:17.9px;width:1.0px;height:2px;background:#3f5a36"></div><div class="a" style="left:1499.8px;top:17.9px;width:1.9px;height:2px;background:#3f5a36"></div><div class="a" style="left:1502.7px;top:17.9px;width:11.6px;height:2px;background:#3f5a36"></div><div class="a" style="left:1515.3px;top:17.9px;width:8.7px;height:2px;background:#3f5a36"></div><div class="a" style="left:1525.0px;top:17.9px;width:2.9px;height:2px;background:#3f5a36"></div><div class="a" style="left:1528.9px;top:17.9px;width:1.9px;height:2px;background:#3f5a36"></div><div class="a" style="left:1531.8px;top:17.9px;width:3.9px;height:2px;background:#3f5a36"></div><div class="a" style="left:1536.7px;top:17.9px;width:8.7px;height:2px;background:#3f5a36"></div><div class="a" style="left:1546.4px;top:17.9px;width:3.9px;height:2px;background:#3f5a36"></div><div class="a" style="left:1551.2px;top:17.9px;width:8.7px;height:2px;background:#3f5a36"></div><div class="a" style="left:1560.9px;top:17.9px;width:1.9px;height:2px;background:#3f5a36"></div><div class="a" style="left:1563.8px;top:17.9px;width:3.9px;height:2px;background:#3f5a36"></div><div class="a" style="left:1568.7px;top:17.9px;width:5.8px;height:2px;background:#3f5a36"></div><div class="a" style="left:1497.9px;top:20.4px;width:1.0px;height:2px;background:#3f5a36"></div><div class="a" style="left:1499.8px;top:20.4px;width:1.9px;height:2px;background:#3f5a36"></div><div class="a" style="left:1502.7px;top:20.4px;width:9.7px;height:2px;background:#3f5a36"></div><div class="a" style="left:1513.4px;top:20.4px;width:8.7px;height:2px;background:#3f5a36"></div><div class="a" style="left:1523.1px;top:20.4px;width:8.7px;height:2px;background:#3f5a36"></div><div class="a" style="left:1532.8px;top:20.4px;width:8.7px;height:2px;background:#3f5a36"></div><div class="a" style="left:1542.5px;top:20.4px;width:2.9px;height:2px;background:#3f5a36"></div><div class="a" style="left:1546.4px;top:20.4px;width:1.9px;height:2px;background:#3f5a36"></div><div class="a" style="left:1549.3px;top:20.4px;width:11.6px;height:2px;background:#3f5a36"></div><div class="a" style="left:1497.9px;top:22.8px;width:1.0px;height:2px;background:#3f5a36"></div><div class="a" style="left:1499.8px;top:22.8px;width:1.9px;height:2px;background:#3f5a36"></div><div class="a" style="left:1502.7px;top:22.8px;width:7.8px;height:2px;background:#3f5a36"></div><div class="a" style="left:1511.5px;top:22.8px;width:9.7px;height:2px;background:#3f5a36"></div><div class="a" style="left:1522.1px;top:22.8px;width:3.9px;height:2px;background:#3f5a36"></div><div class="a" style="left:1527.0px;top:22.8px;width:1.0px;height:2px;background:#3f5a36"></div><div class="a" style="left:1528.9px;top:22.8px;width:7.8px;height:2px;background:#3f5a36"></div><div class="a" style="left:1537.7px;top:22.8px;width:4.8px;height:2px;background:#3f5a36"></div><div class="a" style="left:1543.5px;top:22.8px;width:5.8px;height:2px;background:#3f5a36"></div><div class="a" style="left:1550.3px;top:22.8px;width:12.6px;height:2px;background:#3f5a36"></div><div class="a" style="left:1494.0px;top:30.0px;width:1.9px;height:2px;background:#3f5a36"></div><div class="a" style="left:1496.9px;top:30.0px;width:8.7px;height:2px;background:#3f5a36"></div><div class="a" style="left:1506.6px;top:30.0px;width:7.8px;height:2px;background:#3f5a36"></div><div class="a" style="left:1515.3px;top:30.0px;width:7.8px;height:2px;background:#3f5a36"></div><div class="a" style="left:1524.1px;top:30.0px;width:3.9px;height:2px;background:#3f5a36"></div><div class="a" style="left:1494.0px;top:32.5px;width:2.9px;height:2px;background:#6e6e62"></div><div class="a" style="left:1497.9px;top:32.5px;width:13.6px;height:2px;background:#6e6e62"></div><div class="a" style="left:1497.9px;top:34.9px;width:1.9px;height:2px;background:#6e6e62"></div><div class="a" style="left:1500.8px;top:34.9px;width:1.0px;height:2px;background:#6e6e62"></div><div class="a" style="left:1502.7px;top:34.9px;width:1.9px;height:2px;background:#6e6e62"></div><div class="a" style="left:1505.6px;top:34.9px;width:1.9px;height:2px;background:#6e6e62"></div><div class="a" style="left:1508.5px;top:34.9px;width:1.0px;height:2px;background:#3f5a36"></div><div class="a" style="left:1510.5px;top:34.9px;width:3.9px;height:2px;background:#3f5a36"></div><div class="a" style="left:1515.3px;top:34.9px;width:3.9px;height:2px;background:#3f5a36"></div><div class="a" style="left:1520.2px;top:34.9px;width:1.9px;height:2px;background:#3f5a36"></div><div class="a" style="left:1523.1px;top:34.9px;width:13.6px;height:2px;background:#3f5a36"></div><div class="a" style="left:1537.7px;top:34.9px;width:2.9px;height:2px;background:#3f5a36"></div><div class="a" style="left:1541.5px;top:34.9px;width:8.7px;height:2px;background:#3f5a36"></div><div class="a" style="left:1501.8px;top:37.3px;width:17.5px;height:2px;background:#6e6e62"></div><div class="a" style="left:1497.9px;top:39.7px;width:4.8px;height:2px;background:#6e6e62"></div><div class="a" style="left:1501.8px;top:42.1px;width:7.8px;height:2px;background:#6e6e62"></div><div class="a" style="left:1501.8px;top:44.6px;width:11.6px;height:2px;background:#6e6e62"></div><div class="a" style="left:1514.4px;top:44.6px;width:1.0px;height:2px;background:#6e6e62"></div><div class="a" style="left:1516.3px;top:44.6px;width:1.9px;height:2px;background:#6e6e62"></div><div class="a" style="left:1519.2px;top:44.6px;width:1.0px;height:2px;background:#3f5a36"></div><div class="a" style="left:1521.2px;top:44.6px;width:3.9px;height:2px;background:#3f5a36"></div><div class="a" style="left:1526.0px;top:44.6px;width:3.9px;height:2px;background:#3f5a36"></div><div class="a" style="left:1530.9px;top:44.6px;width:2.9px;height:2px;background:#3f5a36"></div><div class="a" style="left:1534.7px;top:44.6px;width:3.9px;height:2px;background:#3f5a36"></div><div class="a" style="left:1539.6px;top:44.6px;width:7.8px;height:2px;background:#3f5a36"></div><div class="a" style="left:1548.3px;top:44.6px;width:3.9px;height:2px;background:#3f5a36"></div><div class="a" style="left:1553.2px;top:44.6px;width:2.9px;height:2px;background:#3f5a36"></div><div class="a" style="left:1557.0px;top:44.6px;width:3.9px;height:2px;background:#3f5a36"></div><div class="a" style="left:1494.0px;top:49.4px;width:1.9px;height:2px;background:#3f5a36"></div><div class="a" style="left:1496.9px;top:49.4px;width:8.7px;height:2px;background:#3f5a36"></div><div class="a" style="left:1506.6px;top:49.4px;width:7.8px;height:2px;background:#3f5a36"></div><div class="a" style="left:1515.3px;top:49.4px;width:8.7px;height:2px;background:#3f5a36"></div><div class="a" style="left:1525.0px;top:49.4px;width:7.8px;height:2px;background:#3f5a36"></div><div class="a" style="left:1494.0px;top:51.8px;width:1.9px;height:2px;background:#3f5a36"></div><div class="a" style="left:1496.9px;top:51.8px;width:2.9px;height:2px;background:#3f5a36"></div><div class="a" style="left:1500.8px;top:51.8px;width:8.7px;height:2px;background:#3f5a36"></div><div class="a" style="left:1510.5px;top:51.8px;width:7.8px;height:2px;background:#3f5a36"></div><div class="a" style="left:1519.2px;top:51.8px;width:1.9px;height:2px;background:#3f5a36"></div><div class="a" style="left:1522.1px;top:51.8px;width:1.0px;height:2px;background:#3f5a36"></div><div class="a" style="left:1524.1px;top:51.8px;width:5.8px;height:2px;background:#3f5a36"></div><div class="a" style="left:1530.9px;top:51.8px;width:1.9px;height:2px;background:#3f5a36"></div><div class="a" style="left:1533.8px;top:51.8px;width:6.8px;height:2px;background:#3f5a36"></div><div class="a" style="left:1541.5px;top:51.8px;width:4.8px;height:2px;background:#3f5a36"></div><div class="a" style="left:1547.3px;top:51.8px;width:3.9px;height:2px;background:#3f5a36"></div><div class="a" style="left:1552.2px;top:51.8px;width:5.8px;height:2px;background:#3f5a36"></div><div class="a" style="left:1559.0px;top:51.8px;width:1.9px;height:2px;background:#3f5a36"></div><div class="a" style="left:1561.9px;top:51.8px;width:2.9px;height:2px;background:#3f5a36"></div><div class="a" style="left:1565.8px;top:51.8px;width:2.9px;height:2px;background:#3f5a36"></div><div class="a" style="left:1569.7px;top:51.8px;width:1.9px;height:2px;background:#3f5a36"></div><div class="a" style="left:1572.6px;top:51.8px;width:2.9px;height:2px;background:#3f5a36"></div><div class="a" style="left:1576.5px;top:51.8px;width:2.9px;height:2px;background:#3f5a36"></div><div class="a" style="left:1580.3px;top:51.8px;width:8.7px;height:2px;background:#3f5a36"></div><div class="a" style="left:1590.0px;top:51.8px;width:4.8px;height:2px;background:#3f5a36"></div><div class="a" style="left:1595.8px;top:51.8px;width:7.8px;height:2px;background:#3f5a36"></div><div class="a" style="left:1604.6px;top:51.8px;width:1.9px;height:2px;background:#3f5a36"></div><div class="a" style="left:1494.0px;top:54.2px;width:2.9px;height:2px;background:#6e6e62"></div><div class="a" style="left:1497.9px;top:54.2px;width:12.6px;height:2px;background:#6e6e62"></div><div class="a" style="left:1497.9px;top:56.7px;width:1.0px;height:2px;background:#3f5a36"></div><div class="a" style="left:1499.8px;top:56.7px;width:1.9px;height:2px;background:#3f5a36"></div><div class="a" style="left:1502.7px;top:56.7px;width:1.9px;height:2px;background:#3f5a36"></div><div class="a" style="left:1505.6px;top:56.7px;width:1.9px;height:2px;background:#3f5a36"></div><div class="a" style="left:1508.5px;top:56.7px;width:1.9px;height:2px;background:#3f5a36"></div><div class="a" style="left:1511.5px;top:56.7px;width:1.9px;height:2px;background:#3f5a36"></div><div class="a" style="left:1514.4px;top:56.7px;width:1.9px;height:2px;background:#3f5a36"></div><div class="a" style="left:1517.3px;top:56.7px;width:2.9px;height:2px;background:#3f5a36"></div><div class="a" style="left:1521.2px;top:56.7px;width:2.9px;height:2px;background:#3f5a36"></div><div class="a" style="left:1525.0px;top:56.7px;width:2.9px;height:2px;background:#3f5a36"></div><div class="a" style="left:1528.9px;top:56.7px;width:2.9px;height:2px;background:#3f5a36"></div><div class="a" style="left:1532.8px;top:56.7px;width:2.9px;height:2px;background:#3f5a36"></div><div class="a" style="left:1536.7px;top:56.7px;width:3.9px;height:2px;background:#3f5a36"></div><div class="a" style="left:1541.5px;top:56.7px;width:6.8px;height:2px;background:#3f5a36"></div><div class="a" style="left:1497.9px;top:59.1px;width:1.9px;height:2px;background:#6e6e62"></div><div class="a" style="left:1500.8px;top:59.1px;width:1.0px;height:2px;background:#6e6e62"></div><div class="a" style="left:1502.7px;top:59.1px;width:1.9px;height:2px;background:#6e6e62"></div><div class="a" style="left:1505.6px;top:59.1px;width:1.9px;height:2px;background:#6e6e62"></div><div class="a" style="left:1508.5px;top:59.1px;width:1.0px;height:2px;background:#3f5a36"></div><div class="a" style="left:1510.5px;top:59.1px;width:3.9px;height:2px;background:#3f5a36"></div><div class="a" style="left:1515.3px;top:59.1px;width:3.9px;height:2px;background:#3f5a36"></div><div class="a" style="left:1501.8px;top:61.5px;width:5.8px;height:2px;background:#6e6e62"></div><div class="a" style="left:1508.5px;top:61.5px;width:1.0px;height:2px;background:#6e6e62"></div><div class="a" style="left:1497.9px;top:63.9px;width:4.8px;height:2px;background:#6e6e62"></div><div class="a" style="left:1501.8px;top:66.3px;width:5.8px;height:2px;background:#6e6e62"></div><div class="a" style="left:1508.5px;top:66.3px;width:10.7px;height:2px;background:#6e6e62"></div><div class="a" style="left:1520.2px;top:66.3px;width:1.0px;height:2px;background:#6e6e62"></div><div class="a" style="left:1522.1px;top:66.3px;width:1.9px;height:2px;background:#6e6e62"></div><div class="a" style="left:1525.0px;top:66.3px;width:1.0px;height:2px;background:#6e6e62"></div><div class="a" style="left:1527.0px;top:66.3px;width:10.7px;height:2px;background:#6e6e62"></div><div class="a" style="left:1538.6px;top:66.3px;width:1.0px;height:2px;background:#6e6e62"></div><div class="a" style="left:1540.6px;top:66.3px;width:1.9px;height:2px;background:#6e6e62"></div><div class="a" style="left:1494.0px;top:71.2px;width:12.6px;height:2px;background:#6e6e62"></div><div class="a" style="left:1494.0px;top:73.6px;width:19.4px;height:2px;background:#6e6e62"></div>
<div class="a" style="left:1608px;top:49px;width:13px;height:214px;background:#444444"></div>
<div class="a" style="left:1608px;top:164px;width:20px;height:11px;background:#7d7d38"></div>
</div>
<div class="a" style="left:46px;top:655px;width:1874px;height:334px;background:#181818;border-top:1px solid #2b2b2b;box-sizing:border-box"></div>
<div class="t" style="left:72.0px;top:670px;font-size:12.400px;-webkit-text-stroke:0;color:#a6a6a6">PROBLEMS</div>
<div class="t" style="left:169.5px;top:670px;font-size:12.400px;-webkit-text-stroke:0;color:#a6a6a6">OUTPUT</div>
<div class="t" style="left:252.0px;top:670px;font-size:12.400px;-webkit-text-stroke:0;color:#a6a6a6">DEBUG CONSOLE</div>
<div class="t" style="left:388.5px;top:670px;font-size:12.400px;-webkit-text-stroke:0;color:#e7e7e7">TERMINAL</div>
<div class="t" style="left:484.5px;top:670px;font-size:12.400px;-webkit-text-stroke:0;color:#a6a6a6">PORTS</div>
<div class="t" style="left:552.0px;top:670px;font-size:12.400px;-webkit-text-stroke:0;color:#a6a6a6">GITLENS</div>
<div class="a" style="left:388px;top:687px;width:66px;height:2px;background:#1f68ad"></div>
<svg style="left:1796px;top:671px" width="17" height="17" viewBox="0 0 16 16"><path d="M8 1v14M1 8h14" stroke="#d0d0d0" stroke-width="1.700"/></svg>
<svg style="left:1821px;top:677px" width="10" height="8" viewBox="0 0 10 8"><path d="M1 1.500l4 4 4-4" fill="none" stroke="#ccc" stroke-width="1.400"/></svg>
<div class="a" style="left:1846px;top:679px;width:3px;height:3px;background:#ccc;box-shadow:6.500px 0 #ccc,13px 0 #ccc"></div>
<svg style="left:1880px;top:672px" width="14" height="14" viewBox="0 0 14 14"><path d="M1.500 1.500l11 11M12.500 1.500l-11 11" stroke="#d0d0d0" stroke-width="1.700"/></svg>
<div class="term" style="left:72px;top:727.6px"><span class="g">Marcello Cuellar@DESKTOP-CUKQSQC</span> <span class="m">MINGW64</span> <span class="y">/c/repos/python-tester</span> <span class="cy">(main)</span></div>
<div class="term" style="left:72px;top:749.5px">$  /usr/bin/env c:\\Python38\\python.exe c:\\Users\\Marcello\ Cuellar\\.vscode\\extensions\\ms-python.debugpy-2025.4.1-win32-x64\\bundled\\libs\\debugpy\\launcher 54917 -- c:\\repos\\py</div>
<div class="term" style="left:72px;top:771.4px">thon-tester\\cs-review-2\\recursion.py</div>
<div class="term" style="left:72px;top:815.5px"><span class="g">Marcello Cuellar@DESKTOP-CUKQSQC</span> <span class="m">MINGW64</span> <span class="y">/c/repos/python-tester</span> <span class="cy">(main)</span></div>
<div class="term" style="left:72px;top:837.4px">$  cd c:\\repos\\python-tester ; /usr/bin/env c:\\Python38\\python.exe c:\\Users\\Marcello\ Cuellar\\.vscode\\extensions\\ms-python.debugpy-2025.4.1-win32-x64\\bundled\\libs\\debugpy\\l</div>
<div class="term" style="left:72px;top:859.3px">auncher 54941 -- c:\\repos\\python-tester\\cs-review-2\\recursion.py</div>
<div class="term" style="left:72px;top:903.4px"><span class="g">Marcello Cuellar@DESKTOP-CUKQSQC</span> <span class="m">MINGW64</span> <span class="y">/c/repos/python-tester</span> <span class="cy">(main)</span></div>
<div class="term" style="left:72px;top:925.3px">$  cd c:\\repos\\python-tester ; /usr/bin/env c:\\Python38\\python.exe c:\\Users\\Marcello\ Cuellar\\.vscode\\extensions\\ms-python.debugpy-2025.4.1-win32-x64\\bundled\\libs\\debugpy\\l</div>
<div class="term" style="left:72px;top:947.2px">auncher 54980 -- c:\\repos\\python-tester\\cs-review-2\\recursion.py</div>
<div class="a" style="left:55px;top:706.9px;width:10px;height:10px;border-radius:5px;background:#3a96c8"></div>
<div class="a" style="left:55px;top:862.6px;width:10px;height:10px;border-radius:5px;background:#3a96c8"></div>
<div class="a" style="left:56px;top:930.0px;width:9px;height:9px;border-radius:5px;border:1.600px solid #707070;box-sizing:border-box"></div>
<div class="a" style="left:1749px;top:760.6px;width:5px;height:16px;background:#3a8fb0"></div>
<div class="a" style="left:1749px;top:877.3px;width:5px;height:16px;background:#3a8fb0"></div>
<div class="a" style="left:1749px;top:929.5px;width:5px;height:16px;background:#5a5a5a"></div>
<div class="a" style="left:1766px;top:699px;width:160px;height:29px;background:#37373d"></div>
<div class="a" style="left:1765px;top:699px;width:3px;height:29px;background:#2a7aa8"></div>
<svg style="left:1780px;top:704.5px" width="19" height="19" viewBox="0 0 18 18"><circle cx="9" cy="10" r="4.800" fill="none" stroke="#ccc" stroke-width="1.600"/><path d="M9 5V2M4.500 7.500L2 5.500M13.500 7.500l2.500-2M4.500 12.500l-2.500 2M13.500 12.500l2.500 2M1 10h3M14 10h3M6 3.500l3 1.500 3-1.500" fill="none" stroke="#ccc" stroke-width="1.400"/></svg>
<div class="t" style="left:1805px;top:705.0px;font-size:15.500px;color:#e7e7e7">Python Deb...</div>
<svg style="left:1780px;top:732.4px" width="19" height="19" viewBox="0 0 18 18"><circle cx="9" cy="10" r="4.800" fill="none" stroke="#ccc" stroke-width="1.600"/><path d="M9 5V2M4.500 7.500L2 5.500M13.500 7.500l2.500-2M4.500 12.500l-2.500 2M13.500 12.500l2.500 2M1 10h3M14 10h3M6 3.500l3 1.500 3-1.500" fill="none" stroke="#ccc" stroke-width="1.400"/></svg>
<div class="t" style="left:1805px;top:732.9px;font-size:15.500px;color:#ccc">Python Deb...</div>
<div class="a" style="left:0;top:989px;width:1920px;height:40px;background:#1b7fd1"></div>
<svg style="left:2px;top:994px" width="16" height="16" viewBox="0 0 16 16"><path d="M2 3l5 4-5 4M14 5L9 9l5 4" fill="none" stroke="#fff" stroke-width="1.6"/></svg>
<svg style="left:37px;top:993px" width="14" height="18" viewBox="0 0 14 18"><circle cx="3.500" cy="3.500" r="2.2" fill="none" stroke="#fff" stroke-width="1.500"/><circle cx="3.500" cy="14.500" r="2.2" fill="none" stroke="#fff" stroke-width="1.500"/><circle cx="10.500" cy="5.500" r="2.2" fill="none" stroke="#fff" stroke-width="1.500"/><path d="M3.500 6v6M10.500 8c0 3-7 2-7 5" fill="none" stroke="#fff" stroke-width="1.500"/></svg>
<div class="t" style="left:58px;top:992px;font-size:14.500px;color:#fff">main</div>
<svg style="left:98px;top:993px" width="18" height="18" viewBox="0 0 18 18"><path d="M3 9a6 6 0 0 1 10.500-4M15 9a6 6 0 0 1-10.500 4" fill="none" stroke="#fff" stroke-width="1.700"/><path d="M14 1.500v4h-4M4 16.500v-4h4" fill="none" stroke="#fff" stroke-width="1.700"/></svg>
<svg style="left:133px;top:993px" width="18" height="18" viewBox="0 0 18 18"><circle cx="7" cy="8" r="4" fill="none" stroke="#fff" stroke-width="1.600"/><path d="M7 4V1.500M3 6L1 4.500M3 10l-2 1.500M11 6l2-1.500M10 10l7 3.500-5 1.500-1 3z" fill="none" stroke="#fff" stroke-width="1.500"/></svg>
<svg style="left:168px;top:993px" width="18" height="18" viewBox="0 0 18 18"><circle cx="5" cy="12.500" r="3" fill="none" stroke="#fff" stroke-width="1.600"/><circle cx="12.500" cy="5" r="3" fill="none" stroke="#fff" stroke-width="1.600"/><path d="M7 10.500l3.500-3.500" stroke="#fff" stroke-width="1.600"/></svg>
<svg style="left:188px;top:993px" width="18" height="18" viewBox="0 0 18 18"><path d="M2 16c1-5 4-9 12-13-1 6-5 10-9 11M5 13l5-5" fill="none" stroke="#fff" stroke-width="1.600"/></svg>
<div class="t" style="left:210px;top:992px;font-size:14.500px;color:#fff">Launchpad</div>
<svg style="left:303px;top:993px" width="18" height="18" viewBox="0 0 18 18"><circle cx="9" cy="9" r="7" fill="none" stroke="#fff" stroke-width="1.600"/><path d="M6 6l6 6M12 6l-6 6" stroke="#fff" stroke-width="1.600"/></svg>
<div class="t" style="left:324px;top:992px;font-size:14.500px;color:#fff">0</div>
<svg style="left:337px;top:993px" width="18" height="18" viewBox="0 0 18 18"><path d="M9 2L1.500 15.500h15z" fill="none" stroke="#fff" stroke-width="1.600" stroke-linejoin="round"/><path d="M9 7v4.500M9 13v1.500" stroke="#fff" stroke-width="1.600"/></svg>
<div class="t" style="left:358px;top:992px;font-size:14.500px;color:#fff">0</div>
<svg style="left:385px;top:993px" width="18" height="18" viewBox="0 0 18 18"><path d="M3 2c0 6 3 6 6 6s6 0 6-6M9 8v5" fill="none" stroke="#fff" stroke-width="1.800"/><circle cx="9" cy="14.500" r="2.200" fill="none" stroke="#fff" stroke-width="1.500"/><path d="M1 3l2-2 2 2M13 3l2-2 2 2" fill="none" stroke="#fff" stroke-width="1.400"/></svg>
<div class="t" style="left:408px;top:992px;font-size:14.500px;color:#fff">0</div>
<svg style="left:437px;top:993px" width="20" height="18" viewBox="0 0 20 18"><path d="M4 2l10 7-10 7" fill="none" stroke="#fff" stroke-width="1.600"/><circle cx="13" cy="13" r="3.500" fill="#0078d4" stroke="#fff" stroke-width="1.500"/></svg>
<svg style="left:1256px;top:993px" width="12" height="18" viewBox="0 0 12 18"><path d="M6 1v4M6 13v4" stroke="#fff" stroke-width="1.500"/><path d="M6 5l4 4-4 4-4-4z" fill="none" stroke="#fff" stroke-width="1.500"/></svg>
<div class="t" style="left:1273px;top:992px;font-size:14.500px;color:#fff">Marcello Cuellar, yesterday</div>
<div class="t" style="left:1470px;top:992px;font-size:14.500px;color:#fff">Ln 18, Col 1</div>
<div class="t" style="left:1566px;top:992px;font-size:14.500px;color:#fff">Spaces: 4</div>
<div class="t" style="left:1648px;top:992px;font-size:14.500px;color:#fff">UTF-8</div>
<div class="t" style="left:1709px;top:992px;font-size:14.500px;color:#fff">LF</div>
<div class="t" style="left:1742px;top:992px;font-size:14.500px;color:#fff">{ }</div>
<div class="t" style="left:1763px;top:992px;font-size:14.500px;color:#fff">Python</div>
<div class="t" style="left:1830px;top:992px;font-size:14.500px;color:#fff">3.8.0</div>
<svg style="left:1880px;top:993px" width="18" height="18" viewBox="0 0 18 18"><path d="M3 13.500h12l-1.500-2.500V7.500a4.500 4.500 0 0 0-9 0V11zM7.500 15.500a1.600 1.600 0 0 0 3 0" fill="none" stroke="#fff" stroke-width="2"/></svg>
<div class="a" style="left:1911px;top:0;width:3px;height:1014px;background:#0c0c0c"></div>
<div class="a" style="left:1914px;top:0;width:6px;height:292px;background:#6c6c6c"></div>
<div class="a" style="left:1914px;top:292px;width:6px;height:697px;background:#cfcfcf"></div>
<div class="a" style="left:1914px;top:101px;width:6px;height:8px;background:#f4f4f4"></div>
<div class="a" style="left:1914px;top:116px;width:6px;height:8px;background:#f4f4f4"></div>
<div class="a" style="left:1914px;top:271px;width:6px;height:11px;background:#8a8a48"></div>
<div class="a" style="left:1914px;top:989px;width:6px;height:40px;background:#0a2a48"></div>
</div></div></body></html>
